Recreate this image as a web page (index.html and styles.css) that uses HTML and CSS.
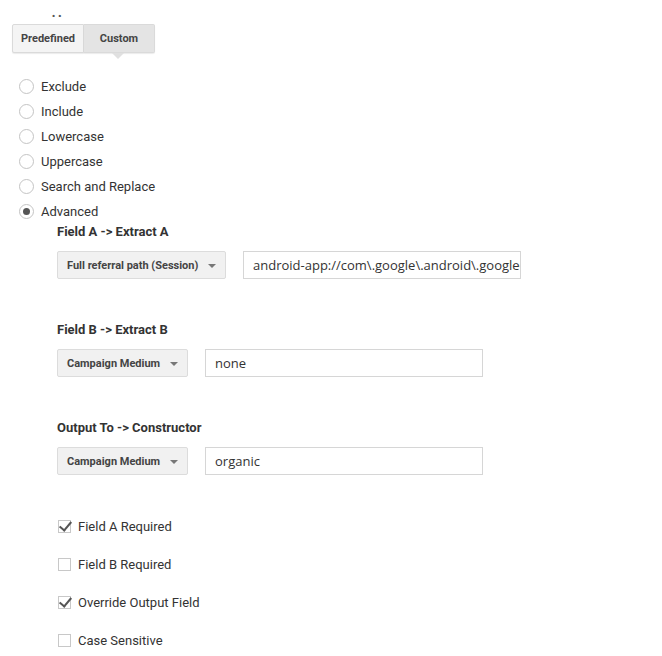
FILE: index.html
```html
<!DOCTYPE html>
<html>
<head>
<meta charset="utf-8">
<link rel="stylesheet" href="styles.css">
</head>
<body>
<div class="page">
  <div class="cut">··</div>
  <div class="tabs">
    <div class="tab">Predefined</div>
    <div class="tab active">Custom</div>
  </div>
  <ul class="radios">
    <li class="radio-row"><span class="radio"></span><span>Exclude</span></li>
    <li class="radio-row"><span class="radio"></span><span>Include</span></li>
    <li class="radio-row"><span class="radio"></span><span>Lowercase</span></li>
    <li class="radio-row"><span class="radio"></span><span>Uppercase</span></li>
    <li class="radio-row"><span class="radio"></span><span>Search and Replace</span></li>
    <li class="radio-row"><span class="radio checked"></span><span>Advanced</span></li>
  </ul>
  <div class="adv">
    <div class="field">
      <div class="label">Field A -&gt; Extract A</div>
      <div class="controls">
        <div class="select w-a">Full referral path (Session)<span class="arrow"></span></div>
        <div class="input">android-app://com\.google\.android\.googlequicksearchbox</div>
      </div>
    </div>
    <div class="field">
      <div class="label">Field B -&gt; Extract B</div>
      <div class="controls">
        <div class="select w-b">Campaign Medium<span class="arrow"></span></div>
        <div class="input">none</div>
      </div>
    </div>
    <div class="field">
      <div class="label">Output To -&gt; Constructor</div>
      <div class="controls">
        <div class="select w-b">Campaign Medium<span class="arrow"></span></div>
        <div class="input">organic</div>
      </div>
    </div>
    <ul class="checks">
      <li class="check-row"><span class="box checked"></span><span>Field A Required</span></li>
      <li class="check-row"><span class="box"></span><span>Field B Required</span></li>
      <li class="check-row"><span class="box checked"></span><span>Override Output Field</span></li>
      <li class="check-row"><span class="box"></span><span>Case Sensitive</span></li>
    </ul>
  </div>
</div>
</body>
</html>
```
FILE: styles.css
```css
* { box-sizing: border-box; }
html, body { margin: 0; padding: 0; background: #fff; }
body {
  font-family: Roboto, "Liberation Sans", Arial, sans-serif;
  color: #333;
  width: 662px;
  height: 656px;
  overflow: hidden;
}
.page { padding: 0; }
.cut {
  height: 24px;
  padding-left: 51px;
  font-size: 20px;
  line-height: 20px;
  letter-spacing: 1px;
  color: #555;
  overflow: hidden;
  padding-top: 6px;
}
.tabs {
  display: flex;
  margin-left: 12px;
  height: 29px;
}
.tab {
  position: relative;
  height: 29px;
  line-height: 27px;
  font-size: 11px;
  font-weight: 700;
  color: #444;
  text-align: center;
  background: #f4f4f4;
  border: 1px solid #dadada;
  box-shadow: 0 1px 1px rgba(0,0,0,0.08);
}
.tab:first-child { width: 72px; border-radius: 2px 0 0 2px; }
.tab.active {
  width: 71px;
  background: #e4e4e4;
  border-left: none;
  border-radius: 0 2px 2px 0;
}
.tab.active::after {
  content: "";
  position: absolute;
  left: 28px;
  bottom: -7px;
  border-left: 6px solid transparent;
  border-right: 6px solid transparent;
  border-top: 6px solid #e0e0e0;
}
.radios {
  list-style: none;
  margin: 21px 0 0 0;
  padding: 0 0 0 19px;
}
.radio-row {
  display: flex;
  align-items: center;
  height: 25px;
  font-size: 13px;
  color: #333;
}
.radio {
  width: 15px;
  height: 15px;
  border: 1px solid #c4c4c4;
  border-radius: 50%;
  margin-right: 7px;
  display: flex;
  align-items: center;
  justify-content: center;
  background: #fff;
}
.radio.checked::after {
  content: "";
  width: 7px;
  height: 7px;
  border-radius: 50%;
  background: #555;
}
.adv { padding-left: 57px; }
.field + .field { margin-top: 43px; }
.label {
  font-size: 13px;
  font-weight: 700;
  color: #333;
  line-height: 16px;
  height: 16px;
}
.controls {
  display: flex;
  margin-top: 11px;
  gap: 17px;
}
.select {
  height: 28px;
  display: flex;
  align-items: center;
  justify-content: space-between;
  padding: 0 9px 0 9px;
  font-size: 11px;
  font-weight: 700;
  color: #444;
  background: #f1f1f1;
  border: 1px solid #dcdcdc;
  border-radius: 2px;
}
.w-a { width: 169px; }
.w-b { width: 131px; }
.arrow {
  width: 0;
  height: 0;
  border-left: 4px solid transparent;
  border-right: 4px solid transparent;
  border-top: 4px solid #777;
  margin-top: 2px;
}
.input {
  width: 278px;
  height: 28px;
  border: 1px solid #d6d6d6;
  background: #fff;
  padding: 0 9px;
  font-family: "Open Sans", "Liberation Sans", sans-serif;
  font-size: 13px;
  line-height: 26px;
  color: #333;
  white-space: nowrap;
  overflow: hidden;
}
.checks {
  list-style: none;
  margin: 32px 0 0 1px;
  padding: 0;
}
.check-row {
  display: flex;
  align-items: center;
  height: 38px;
  font-size: 13px;
  color: #333;
}
.box {
  position: relative;
  width: 13px;
  height: 13px;
  border: 1px solid #c8c8c8;
  margin-right: 7px;
  background: #fff;
}
.box.checked::after {
  content: "";
  position: absolute;
  left: 3px;
  top: -2px;
  width: 5px;
  height: 10px;
  border-right: 2px solid #555;
  border-bottom: 2px solid #555;
  transform: rotate(40deg);
}
```
